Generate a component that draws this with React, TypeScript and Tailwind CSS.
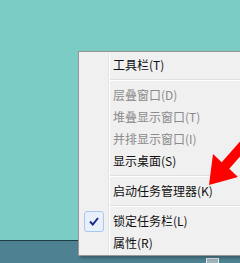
import React from 'react';

type Item =
  | { kind: 'item'; label: string; disabled?: boolean; checked?: boolean }
  | { kind: 'sep' };

const items: Item[] = [
  { kind: 'item', label: '工具栏(T)' },
  { kind: 'sep' },
  { kind: 'item', label: '层叠窗口(D)', disabled: true },
  { kind: 'item', label: '堆叠显示窗口(T)', disabled: true },
  { kind: 'item', label: '并排显示窗口(I)', disabled: true },
  { kind: 'item', label: '显示桌面(S)' },
  { kind: 'sep' },
  { kind: 'item', label: '启动任务管理器(K)' },
  { kind: 'sep' },
  { kind: 'item', label: '锁定任务栏(L)', checked: true },
  { kind: 'item', label: '属性(R)' },
];

function Gutter({ children }: { children?: React.ReactNode }) {
  return (
    <div className="w-[30px] shrink-0 flex items-center justify-center border-r border-r-[#e2e3e3] shadow-[1px_0_0_#ffffff]">
      {children}
    </div>
  );
}

function MenuRow({ item }: { item: Item }) {
  if (item.kind === 'sep') {
    return (
      <div className="flex h-[8px]">
        <Gutter />
        <div className="flex-1 flex flex-col justify-center pl-[1px]">
          <div className="h-[1px] bg-[#e0e0e0]" />
          <div className="h-[1px] bg-white" />
        </div>
      </div>
    );
  }
  return (
    <div className="flex h-[22px]">
      <Gutter>
        {item.checked && (
          <div className="w-[20px] h-[21px] rounded-[3px] border border-[#a9c8f0] bg-[#e8f0fb] flex items-center justify-center">
            <svg width="10" height="9" viewBox="0 0 10 9">
              <path d="M1 4.5 L3.8 7.5 L9 1" fill="none" stroke="#1e2a8a" strokeWidth="2" />
            </svg>
          </div>
        )}
      </Gutter>
      <div
        className={`flex items-center pl-[4px] text-[12px] whitespace-nowrap ${item.disabled ? 'text-[#8b8b8b]' : 'text-[#111]'}`}
      >
        {item.label}
      </div>
    </div>
  );
}

export default function App() {
  return (
    <div
      className="relative w-[240px] h-[263px] overflow-hidden flex flex-col"
      style={{ fontFamily: '"Noto Sans CJK SC", "Liberation Sans", sans-serif' }}
    >
      {/* Desktop */}
      <div className="flex-1 bg-[#7bccc5]" />
      {/* Taskbar */}
      <div className="h-[23px] bg-[#4e8292] border-t border-t-[#1f3c44] flex justify-end items-end pr-[20px]">
        <div className="w-[13px] h-[5px] border-t border-x border-[#e8eef0] bg-[#9fb3ba] mr-[1px]" />
      </div>

      {/* Context menu */}
      <div className="absolute left-[78px] top-[51px] w-[180px] border border-[#979797] bg-[#f0f0f0] pt-[2px] pb-[1px] shadow-[2px_2px_3px_rgba(0,0,0,0.3)]">
        {items.map((item, i) => (
          <MenuRow key={i} item={item} />
        ))}
      </div>

      {/* Red arrow */}
      <svg className="absolute left-0 top-0" width="240" height="263" viewBox="0 0 240 263">
        <polygon
          points="209,185 213,154 221.7,162.2 241.5,139.7 249,146.3 229.3,168.8 238,177"
          fill="#ff0000"
        />
      </svg>
    </div>
  );
}
